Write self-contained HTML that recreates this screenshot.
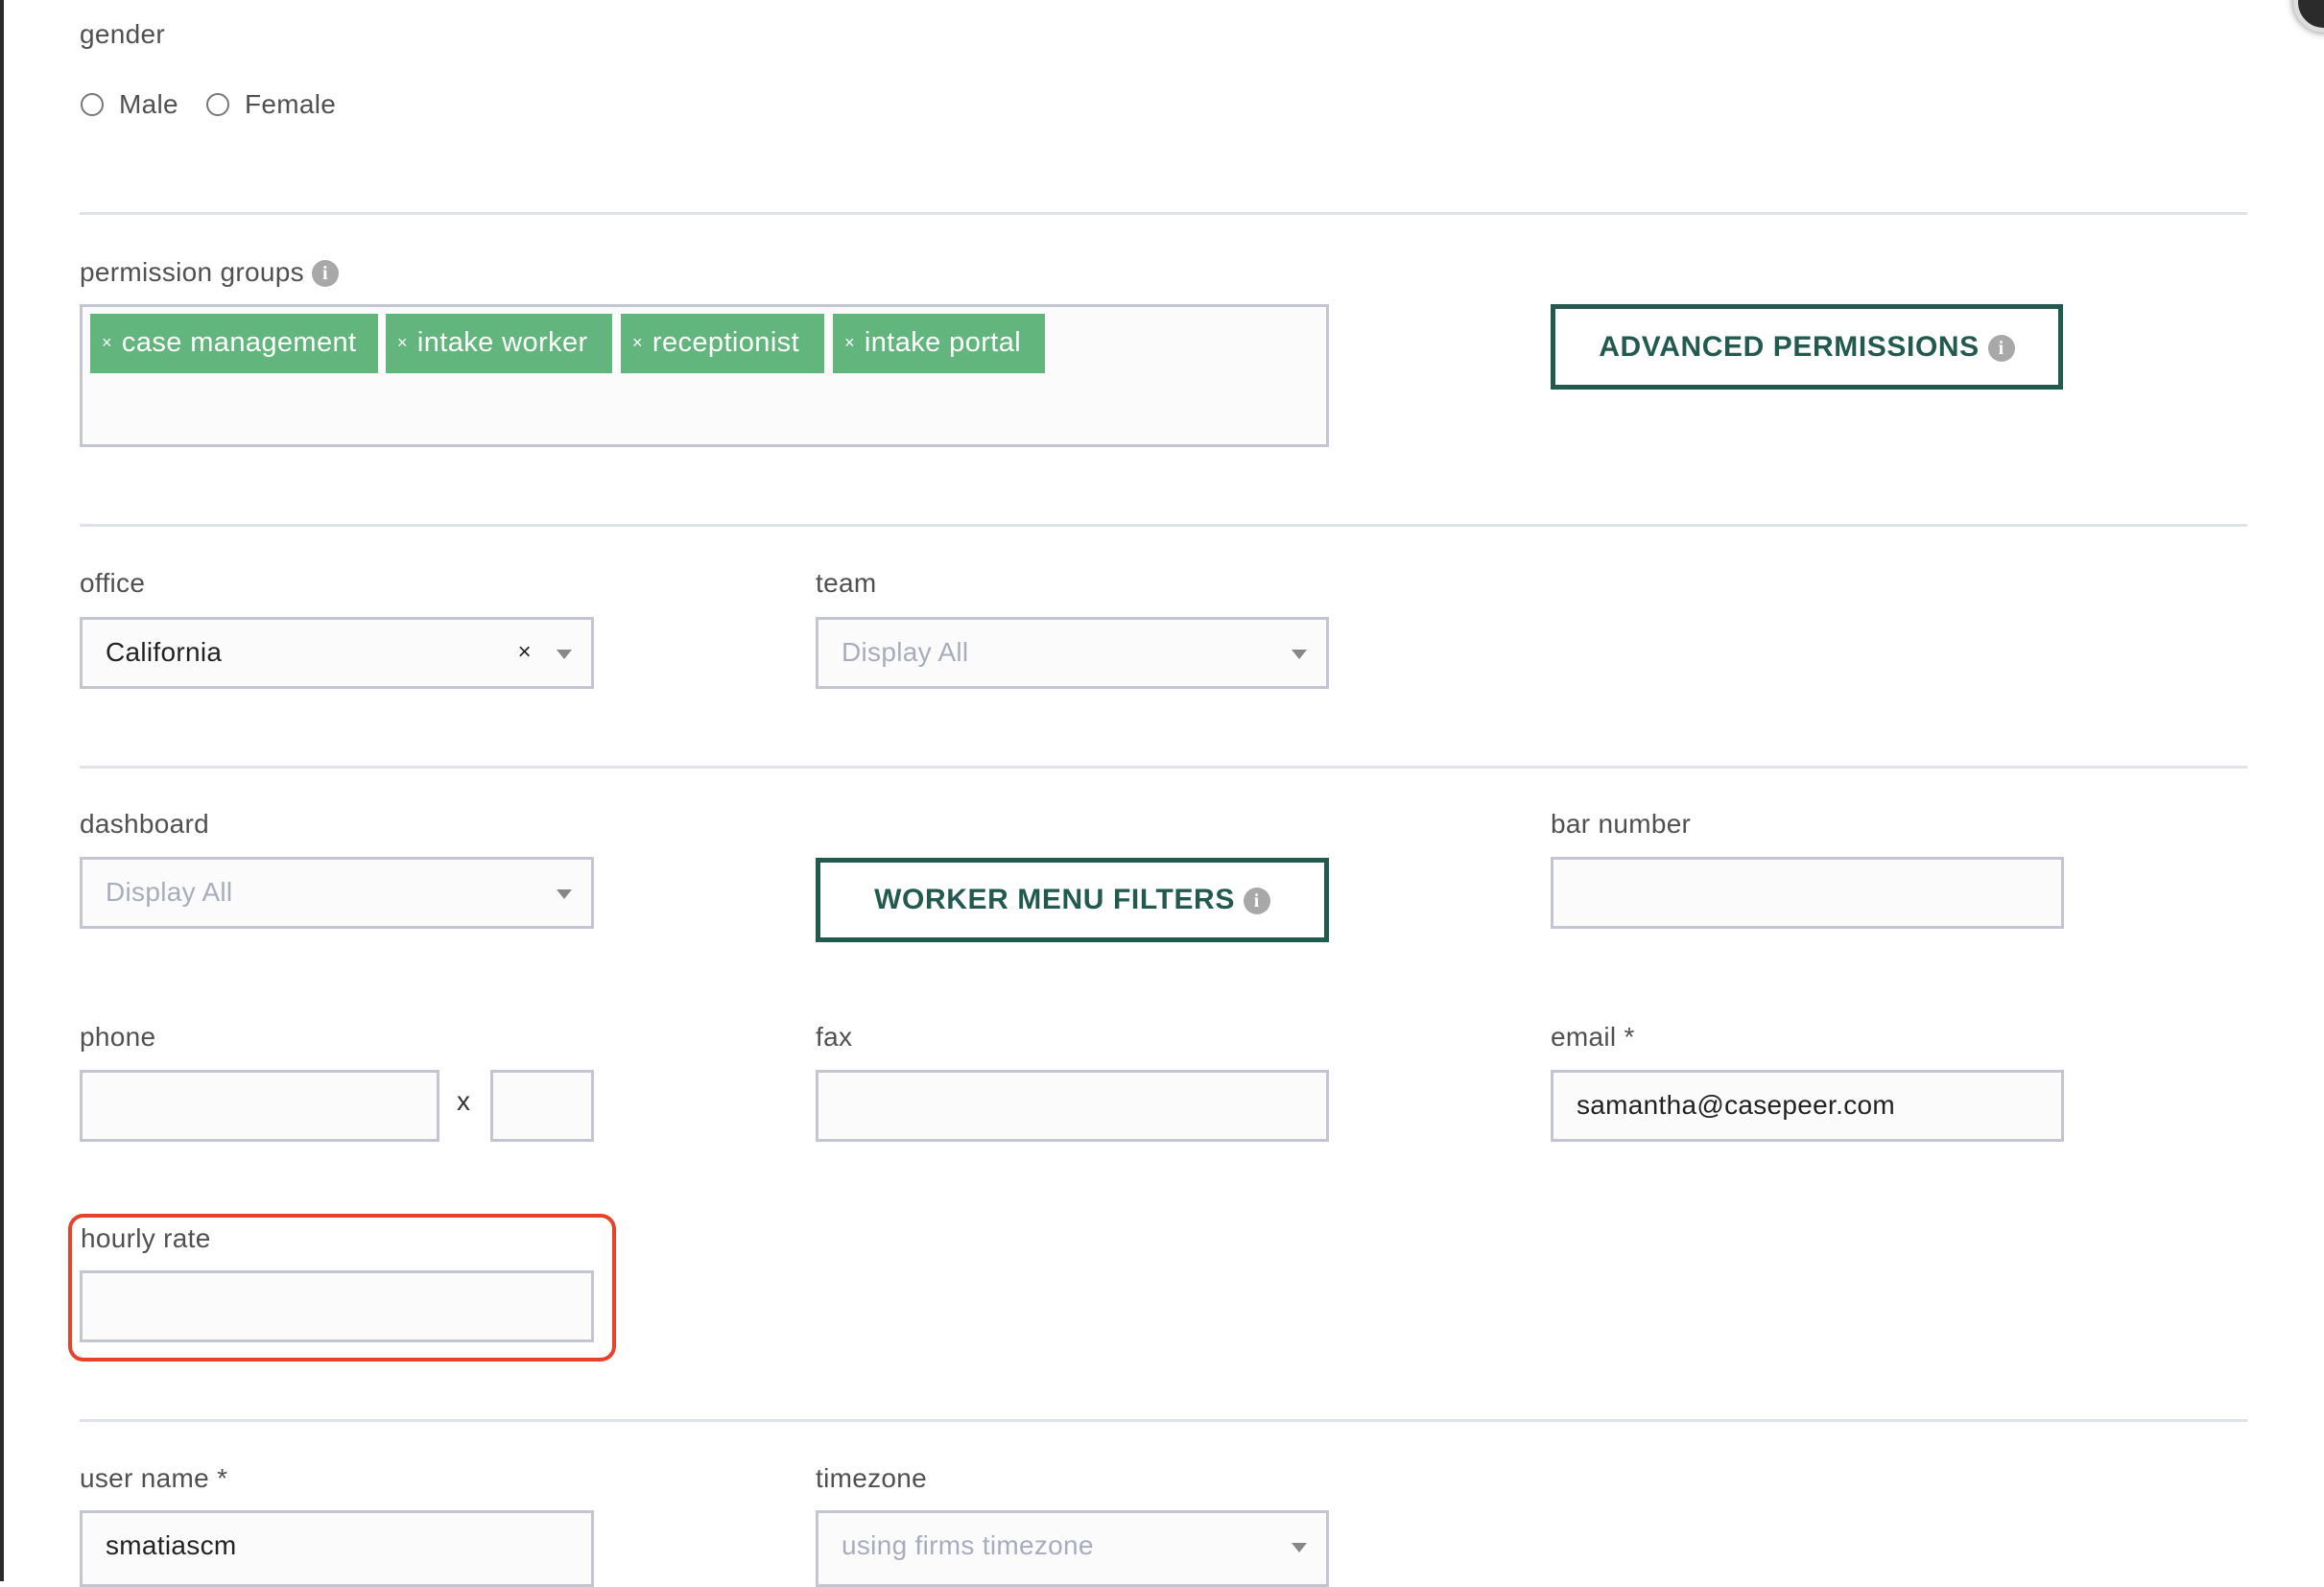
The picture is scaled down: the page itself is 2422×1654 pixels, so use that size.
<!DOCTYPE html>
<html><head><meta charset="utf-8"><style>
*{box-sizing:border-box;margin:0;padding:0}
body{width:2422px;height:1648px;background:#fff;position:relative;overflow:hidden;font-family:"Liberation Sans",sans-serif;color:#4a4a4a}
.a{position:absolute}
.lbl{position:absolute;font-size:28px;color:#505050;line-height:1;letter-spacing:0.3px}
.hr{position:absolute;left:83px;width:2259px;height:3px;background:#dfe2e6}
.in{position:absolute;border:3px solid #c3c6d1;background:#fbfbfb;height:75px;font-size:28px;line-height:67px;padding-left:24px;letter-spacing:0.3px}
.ph{color:#a8adbd}
.arr{position:absolute;right:20px;top:31px;width:0;height:0;border-left:8px solid transparent;border-right:8px solid transparent;border-top:10px solid #888}
.tag{position:absolute;top:327px;height:62px;background:#63b57e;color:#fff;font-size:29px;line-height:60px;padding-left:12px;letter-spacing:0.4px}
.tag span{font-size:18px;margin-right:10px;vertical-align:3px}
.btn{position:absolute;border:5px solid #235a50;color:#235a50;font-weight:bold;font-size:30px;text-align:center;letter-spacing:0.6px}
.info{display:inline-block;width:28px;height:28px;border-radius:50%;background:#a8a8a8;color:#fff;font-size:20px;line-height:28px;text-align:center;font-weight:bold;vertical-align:2px;font-family:"Liberation Serif",serif}
.radio{position:absolute;width:24px;height:24px;border:2px solid #777;border-radius:50%;top:97px}
</style></head><body>
<div class="a" style="left:0;top:0;width:4px;height:1648px;background:#2a2a2a"></div>
<div class="a" style="left:2390px;top:-30px;width:64px;height:64px;border-radius:50%;background:#2b2b2b;border:5px solid #ddd;box-shadow:0 0 8px rgba(0,0,0,.5)"></div>

<div class="lbl" style="left:83px;top:22px">gender</div>
<div class="radio" style="left:84px"></div>
<div class="lbl" style="left:124px;top:95px">Male</div>
<div class="radio" style="left:215px"></div>
<div class="lbl" style="left:255px;top:95px">Female</div>
<div class="hr" style="top:221px"></div>

<div class="lbl" style="left:83px;top:270px">permission groups <span class="info">i</span></div>
<div class="a" style="left:83px;top:317px;width:1302px;height:149px;border:3px solid #c3c6d1;background:#fbfbfb"></div>
<div class="tag" style="left:94px;width:300px"><span>×</span>case management</div>
<div class="tag" style="left:402px;width:236px"><span>×</span>intake worker</div>
<div class="tag" style="left:647px;width:212px"><span>×</span>receptionist</div>
<div class="tag" style="left:868px;width:221px"><span>×</span>intake portal</div>
<div class="btn" style="left:1616px;top:317px;width:534px;height:89px;line-height:79px">ADVANCED PERMISSIONS <span class="info">i</span></div>
<div class="hr" style="top:546px"></div>

<div class="lbl" style="left:83px;top:594px">office</div>
<div class="in" style="left:83px;top:643px;width:536px;color:#222">California<span class="a" style="right:62px;top:0;font-size:24px;color:#222">×</span><div class="arr"></div></div>
<div class="lbl" style="left:850px;top:594px">team</div>
<div class="in ph" style="left:850px;top:643px;width:535px">Display All<div class="arr"></div></div>
<div class="hr" style="top:798px"></div>

<div class="lbl" style="left:83px;top:845px">dashboard</div>
<div class="in ph" style="left:83px;top:893px;width:536px">Display All<div class="arr"></div></div>
<div class="btn" style="left:850px;top:894px;width:535px;height:88px;line-height:78px">WORKER MENU FILTERS <span class="info">i</span></div>
<div class="lbl" style="left:1616px;top:845px">bar number</div>
<div class="in" style="left:1616px;top:893px;width:535px"></div>

<div class="lbl" style="left:83px;top:1067px">phone</div>
<div class="in" style="left:83px;top:1115px;width:375px"></div>
<div class="lbl" style="left:476px;top:1134px;color:#333">x</div>
<div class="in" style="left:511px;top:1115px;width:108px"></div>
<div class="lbl" style="left:850px;top:1067px">fax</div>
<div class="in" style="left:850px;top:1115px;width:535px"></div>
<div class="lbl" style="left:1616px;top:1067px">email *</div>
<div class="in" style="left:1616px;top:1115px;width:535px;color:#222">samantha@casepeer.com</div>

<div class="a" style="left:71px;top:1265px;width:571px;height:154px;border:4px solid #e8432a;border-radius:16px"></div>
<div class="lbl" style="left:84px;top:1277px">hourly rate</div>
<div class="in" style="left:83px;top:1324px;width:536px"></div>
<div class="hr" style="top:1479px"></div>

<div class="lbl" style="left:83px;top:1527px">user name *</div>
<div class="in" style="left:83px;top:1574px;width:536px;height:80px;color:#222">smatiascm</div>
<div class="lbl" style="left:850px;top:1527px">timezone</div>
<div class="in ph" style="left:850px;top:1574px;width:535px;height:80px">using firms timezone<div class="arr"></div></div>
</body></html>
